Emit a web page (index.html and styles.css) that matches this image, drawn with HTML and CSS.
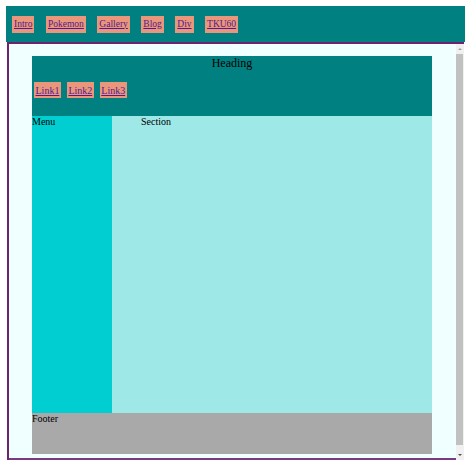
FILE: index.html
```html
<!DOCTYPE html>
<html lang="en">
<head>
<meta charset="utf-8">
<title>Layout</title>
<link rel="stylesheet" href="styles.css">
</head>
<body>
<nav class="topnav">
  <a class="navlink" href="#">Intro</a>
  <a class="navlink" href="#">Pokemon</a>
  <a class="navlink" href="#">Gallery</a>
  <a class="navlink" href="#">Blog</a>
  <a class="navlink" href="#">Div</a>
  <a class="navlink" href="#">TKU60</a>
</nav>
<div class="frame">
  <div class="page">
    <header class="head">
      <h1 class="title">Heading</h1>
      <div class="links">
        <a class="sublink" href="#">Link1</a>
        <a class="sublink" href="#">Link2</a>
        <a class="sublink" href="#">Link3</a>
      </div>
    </header>
    <div class="main">
      <aside class="menu">Menu</aside>
      <section class="section">Section</section>
    </div>
    <footer class="footer">Footer</footer>
  </div>
  <div class="scrollbar">
    <div class="sb-btn"><span class="tri-up"></span></div>
    <div class="sb-thumb"></div>
    <div class="sb-track"></div>
    <div class="sb-btn"><span class="tri-down"></span></div>
  </div>
</div>
</body>
</html>
```
FILE: styles.css
```css
html, body {
  padding: 0;
}
body {
  margin: 6px;
  background: #ffffff;
  font-family: "Liberation Serif", "Times New Roman", serif;
  font-size: 10px;
  color: #000;
}
.topnav {
  width: 459px;
  height: 36px;
  box-sizing: border-box;
  background: #008080;
  display: flex;
  align-items: center;
  gap: 11.5px;
  padding-left: 6px;
}
.navlink {
  background: #e9967a;
  color: #551a8b;
  text-decoration: underline;
  font-size: 9.5px;
  line-height: 11px;
  padding: 3px 2px;
}
.frame {
  margin-left: 1px;
  width: 457px;
  box-sizing: border-box;
  display: flex;
  border-left: 2px solid #6a2470;
  border-top: 2px solid #6a2470;
}
.page {
  flex: 1;
  background: #f0ffff;
  padding: 12px 24px 4px 23px;
  border-bottom: 2px solid #7a3a80;
}
.head {
  height: 60px;
  background: #008080;
}
.title {
  margin: 0;
  font-size: 12px;
  line-height: 14px;
  font-weight: normal;
  text-align: center;
}
.links {
  display: flex;
  gap: 6px;
  margin-top: 12px;
  padding-left: 2px;
}
.sublink {
  background: #e9967a;
  color: #551a8b;
  text-decoration: underline;
  line-height: 11px;
  padding: 2.5px 1.5px;
}
.main {
  display: flex;
  height: 297px;
  line-height: 12px;
}
.menu {
  width: 80px;
  background: #00ced1;
}
.section {
  flex: 1;
  background: #9ee8e7;
  padding-left: 29px;
}
.footer {
  height: 41px;
  background: #a9a9a9;
  line-height: 12px;
}
.scrollbar {
  width: 8px;
  display: flex;
  flex-direction: column;
  background: #f1f1f1;
}
.sb-btn {
  height: 10px;
  display: flex;
  align-items: center;
  justify-content: center;
}
.tri-up {
  width: 0;
  height: 0;
  border-left: 2.5px solid transparent;
  border-right: 2.5px solid transparent;
  border-bottom: 2.5px solid #a3a3a3;
}
.tri-down {
  width: 0;
  height: 0;
  border-left: 2.5px solid transparent;
  border-right: 2.5px solid transparent;
  border-top: 2.5px solid #505050;
}
.sb-thumb {
  height: 391px;
  margin-right: 1px;
  background: #c1c1c1;
}
.sb-track {
  flex: 1;
}
```
